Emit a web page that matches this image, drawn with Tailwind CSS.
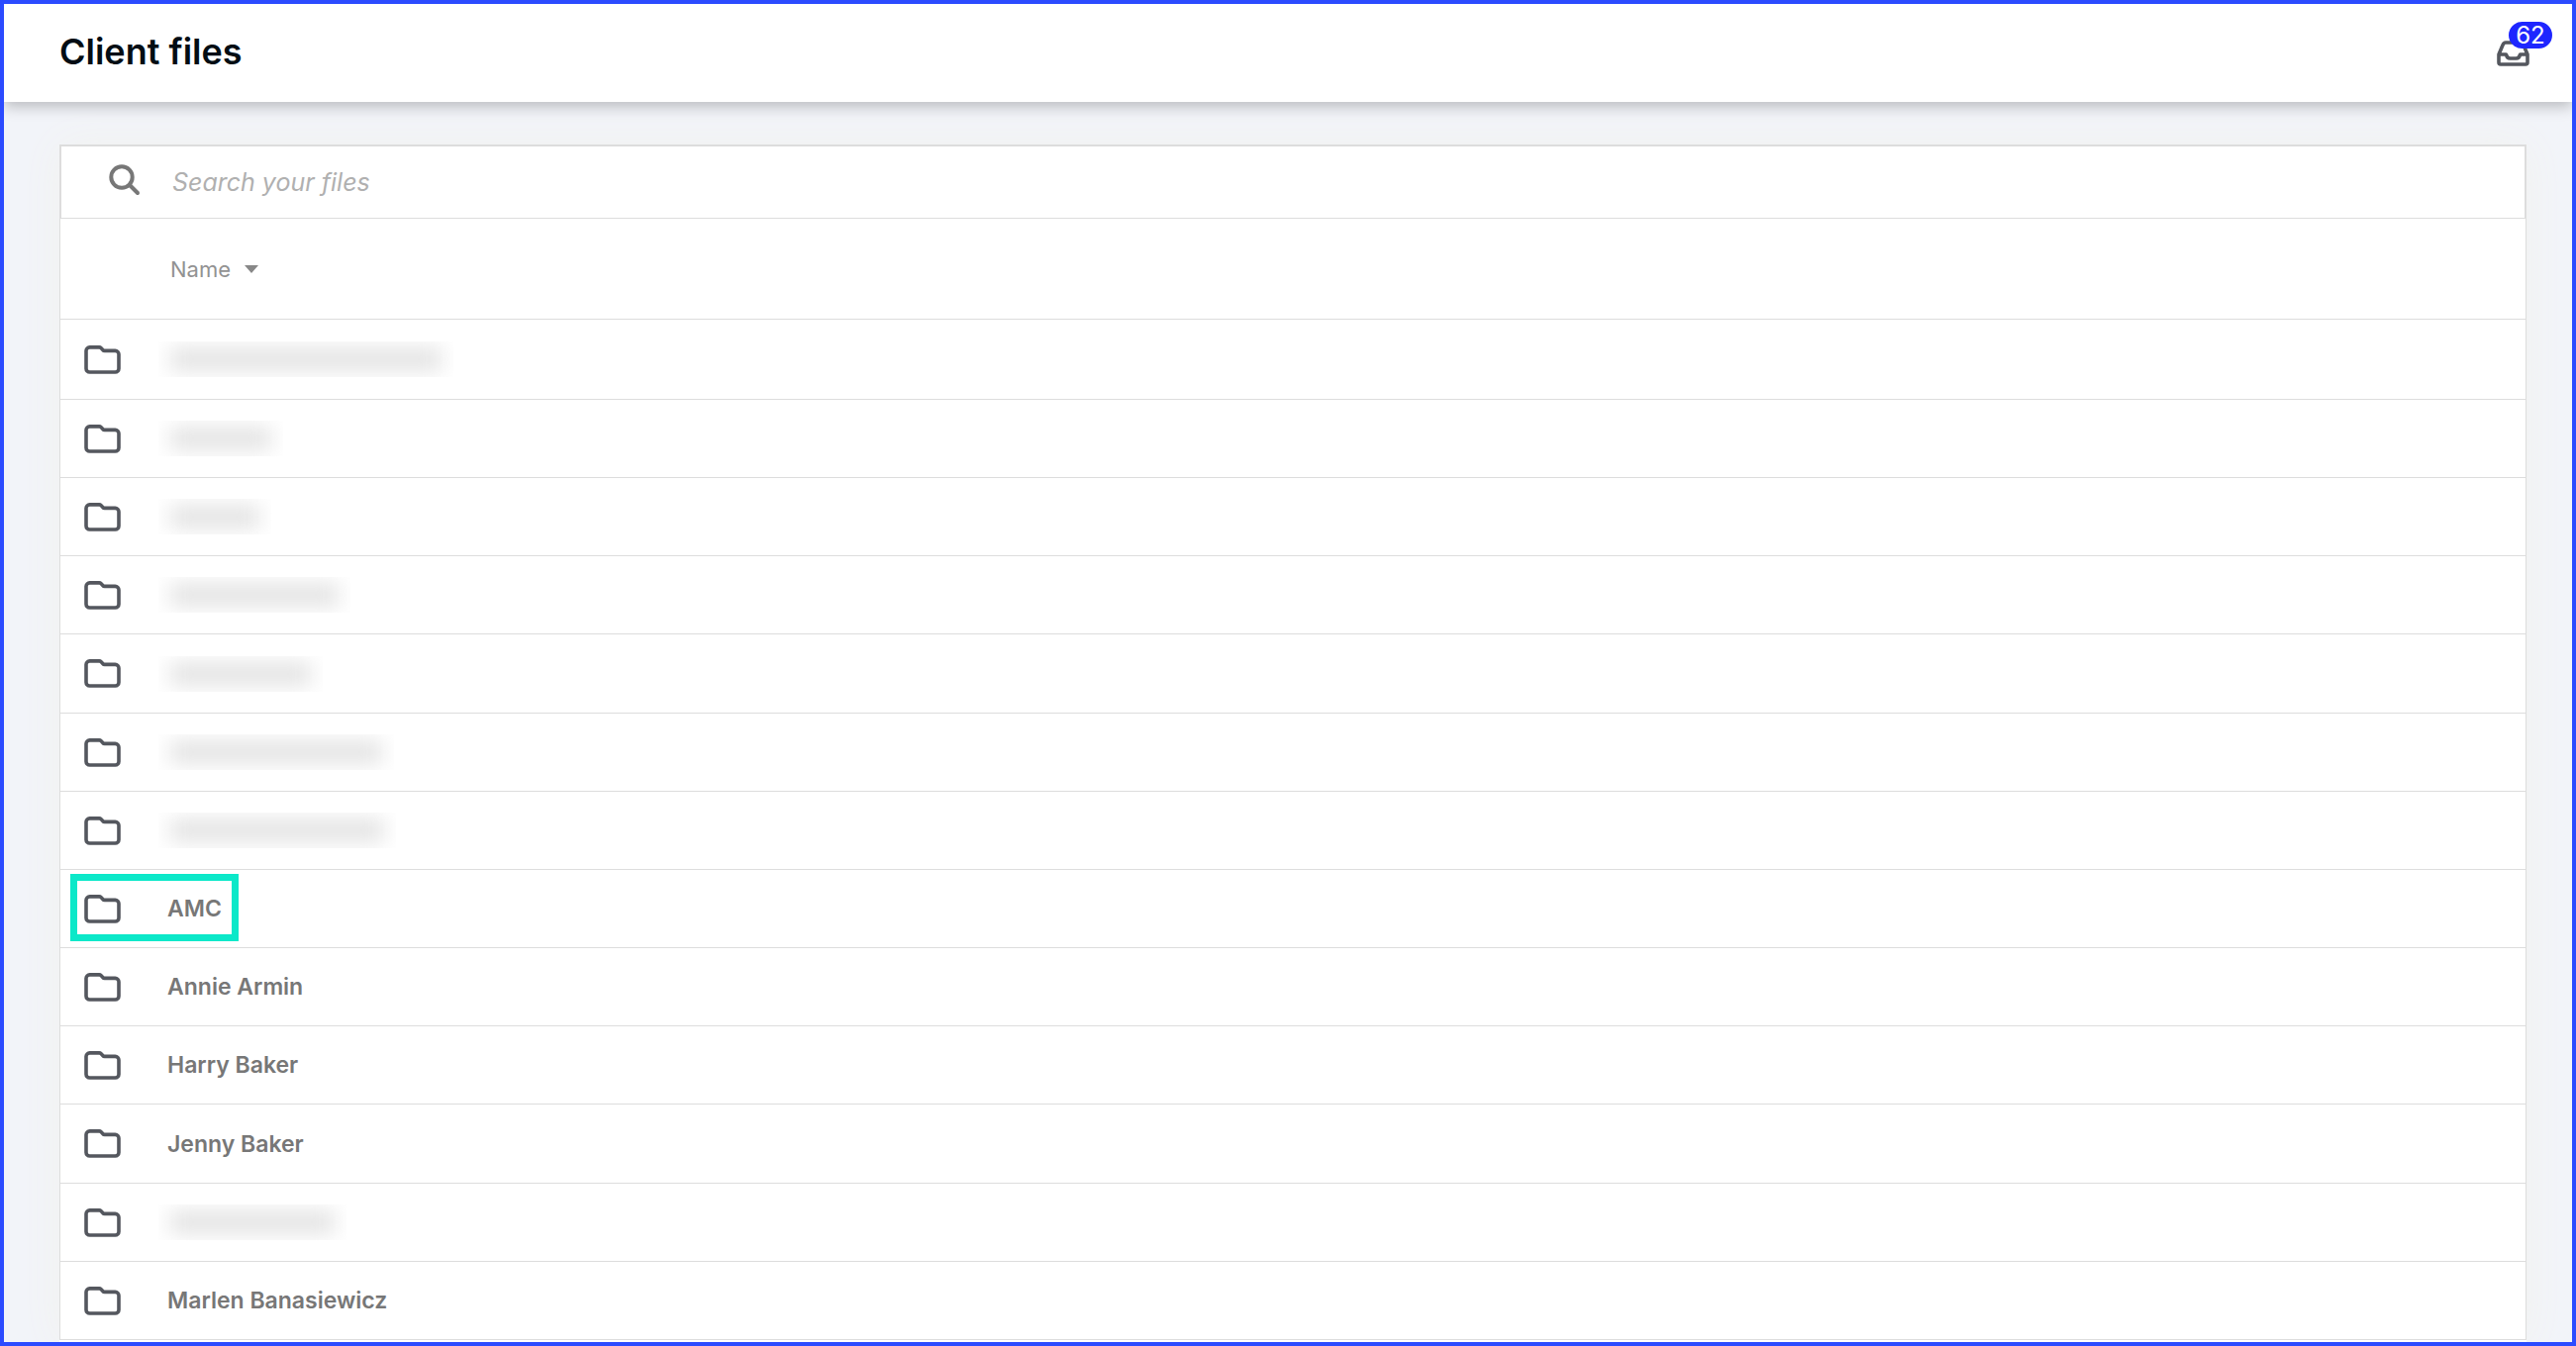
<!DOCTYPE html>
<html lang="en">
<head>
    <meta charset="UTF-8">
    <meta name="viewport" content="width=device-width, initial-scale=1.0">
    <title>Client files</title>
    <script src="https://cdn.jsdelivr.net/npm/@tailwindcss/browser@4"></script>
</head>
<body class="font-['Inter',sans-serif] text-[#777777]">
    <!-- Folder icon, shared by all rows -->
    <svg class="hidden">
        <symbol id="folder" viewBox="0 0 37 29">
            <path d="M2 5.5a3.6 3.6 0 0 1 3.6-3.6h9.6c.9 0 1.4.3 2 .9l1.6 1.7c.5.6 1 .9 1.9.9h10.7a3.6 3.6 0 0 1 3.6 3.6v14.4a3.6 3.6 0 0 1-3.6 3.6H5.6a3.6 3.6 0 0 1-3.6-3.6z" fill="none" stroke="#54575e" stroke-width="3.6" stroke-linejoin="round"/>
        </symbol>
    </svg>

    <div class="h-screen flex flex-col overflow-hidden border-4 border-[#2b4bff] bg-[#f2f4f9]">
        <!-- Header -->
        <header class="relative z-10 h-[99px] shrink-0 flex items-center justify-between bg-white pl-14 pr-5 pb-1 shadow-[0_4px_14px_rgba(0,0,0,0.25)]">
            <h1 class="text-[36px] leading-[44px] font-semibold text-[#030d14]">Client files</h1>
            <button type="button" aria-label="Inbox" class="relative w-14 h-[60px]">
                <svg class="w-[33px] h-[26px] mt-1" viewBox="0 0 33 26" fill="none" stroke="#54575e" stroke-width="3.6" stroke-linejoin="round">
                    <path d="M2 14l4-9.500C6.700 2.700 7.500 2 9 2h15c1.500 0 2.300.7 3 2.500l4 9.500v8a2 2 0 0 1-2 2H4a2 2 0 0 1-2-2zM2 14h7.500c.5 3 1.500 4 4 4h6c2.500 0 3.500-1 4-4H31"/>
                </svg>
                <span class="absolute top-0 left-3 w-11 h-[27px] rounded-full bg-[#1e26ff] text-white text-[24px] leading-[27px] text-center">62</span>
            </button>
        </header>

        <!-- File list -->
        <main class="flex-1 flex flex-col pt-[43px] pl-14 pr-[46px]">
            <div class="flex-1 bg-white shadow-[0_0_40px_rgba(242,242,238,1)]">
                <form class="h-[75px] flex items-center border-2 border-b border-[#dddddd]">
                    <label for="search" aria-label="Search your files" class="ml-12 -mt-1 shrink-0">
                        <svg class="w-8 h-8" viewBox="0 0 32 32" fill="none" stroke="#777777" stroke-width="4" stroke-linecap="round">
                            <circle cx="13" cy="13" r="10.7"/>
                            <path d="M21 21l8 8"/>
                        </svg>
                    </label>
                    <input type="search" id="search" placeholder="Search your files"
                        class="flex-1 h-full ml-8 text-[25px] italic outline-none placeholder:text-[#b0b0b0]">
                </form>

                <table class="w-full table-fixed border-separate border-spacing-0 border-x border-[#dddddd] [&_td]:border-b [&_td]:border-[#dddddd] [&_th]:border-b [&_th]:border-[#dddddd] [&_td]:p-0">
                    <thead>
                        <tr class="h-[102px]">
                            <th class="w-[107px]"></th>
                            <th class="text-left p-0 pl-1">
                                <button type="button" class="flex items-center gap-3.5 text-[22px] leading-7 font-normal text-[#929292]">
                                    Name
                                    <svg class="w-[14px] h-[8px] shrink-0" viewBox="0 0 14 8" fill="#888888"><path d="M0 0h14L7 8z"/></svg>
                                </button>
                            </th>
                        </tr>
                    </thead>
                    <tbody id="files" class="text-[23px] leading-8 font-semibold [&>tr]:h-[79px] [&>tr:first-child]:h-[81px] [&>tr:nth-child(6n+5)]:h-20"></tbody>
                </table>
            </div>
        </main>
    </div>

    <script>
        // Rows with a width instead of a name are redacted
        const files = [
            { width: 298 },
            { width: 126 },
            { width: 114 },
            { width: 194 },
            { width: 166 },
            { width: 238 },
            { width: 240 },
            { name: 'AMC', highlight: true },
            { name: 'Annie Armin' },
            { name: 'Harry Baker' },
            { name: 'Jenny Baker' },
            { width: 190 },
            { name: 'Marlen Banasiewicz' },
        ];

        document.getElementById('files').innerHTML = files.map(file => `
            <tr>
                <td class="relative">
                    <svg class="w-[37px] h-[29px] ml-6" aria-hidden="true"><use href="#folder"/></svg>
                    ${file.highlight ? '<div class="absolute z-10 left-[10px] top-1 w-[170px] h-[68px] border-[7px] border-[#0be8c9]"></div>' : ''}
                </td>
                <td>
                    ${file.name
                        ? `<a href="#" class="block pl-px">${file.name}</a>`
                        : `<div class="h-9 -ml-2 px-3 py-1.5 overflow-hidden" style="width: ${file.width}px"><div class="h-full bg-[#e4e4e4] blur-[10px]"></div></div>`}
                </td>
            </tr>`).join('');
    </script>
</body>
</html>
